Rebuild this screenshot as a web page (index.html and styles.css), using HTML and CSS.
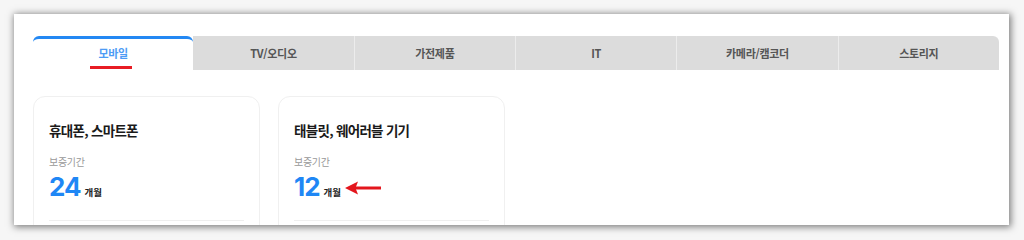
FILE: index.html
```html
<!DOCTYPE html>
<html lang="ko">
<head>
<meta charset="utf-8">
<link rel="stylesheet" href="styles.css">
</head>
<body>
<div class="frame">
  <ul class="tabs">
    <li class="tab active"><span class="tab-label">모바일</span></li>
    <li class="tab"><span class="tab-label">TV/오디오</span></li>
    <li class="tab"><span class="tab-label">가전제품</span></li>
    <li class="tab"><span class="tab-label">IT</span></li>
    <li class="tab"><span class="tab-label">카메라/캠코더</span></li>
    <li class="tab last"><span class="tab-label">스토리지</span></li>
  </ul>
  <div class="cards">
    <div class="card">
      <h3 class="card-title">휴대폰, 스마트폰</h3>
      <p class="card-label">보증기간</p>
      <div class="card-value"><span class="num">24</span><span class="unit">개월</span></div>
      <hr class="card-rule">
    </div>
    <div class="card">
      <h3 class="card-title">태블릿, 웨어러블 기기</h3>
      <p class="card-label">보증기간</p>
      <div class="card-value"><span class="num">12</span><span class="unit">개월</span>
        <svg class="arrow" width="37" height="16" viewBox="0 0 37 16" aria-hidden="true">
          <path d="M10 8 H36" stroke="#e3161d" stroke-width="3" fill="none"/>
          <path d="M0 8 L13 1.5 L10.5 8 L13 14.5 Z" fill="#e3161d"/>
        </svg>
      </div>
      <hr class="card-rule">
    </div>
  </div>
</div>
</body>
</html>
```
FILE: styles.css
```css
* { box-sizing: border-box; }
html, body { margin: 0; padding: 0; }
body {
  width: 1024px;
  height: 240px;
  background: #f6f6f6;
  font-family: "Noto Sans CJK KR", "Noto Sans", sans-serif;
  overflow: hidden;
}
.frame {
  margin: 14px 0 0 14px;
  width: 995px;
  height: 211px;
  background: #fff;
  box-shadow: 1px 1px 7px 1px rgba(0, 0, 0, 0.5);
  padding: 22px 10px 0 19px;
  overflow: hidden;
}
.tabs {
  list-style: none;
  margin: 0;
  padding: 0;
  display: flex;
  height: 34px;
}
.tab {
  flex: 1 1 0;
  background: #dcdcdc;
  border-left: 1px solid #ececec;
  display: flex;
  align-items: center;
  justify-content: center;
  font-size: 11px;
  font-weight: 700;
  color: #555;
  letter-spacing: -0.3px;
}
.tab.active {
  background: #fff;
  border-left: none;
  border-top: 3px solid #2388f3;
  border-radius: 6px 6px 0 0;
  color: #4d9cf5;
  padding-bottom: 3px;
}
.tab.active + .tab { border-left: none; }
.tab.active .tab-label {
  position: relative;
}
.tab.active .tab-label::after {
  content: "";
  position: absolute;
  left: -8px;
  right: -4px;
  top: 21px;
  height: 3px;
  background: #e81c24;
}
.tab.last { border-radius: 0 6px 0 0; }
.cards {
  display: flex;
  gap: 18px;
  margin-top: 26px;
}
.card {
  width: 227px;
  height: 160px;
  border: 1px solid #f0f0f0;
  border-radius: 12px;
  padding: 23px 15px 0 15px;
}
.card-title {
  margin: 0;
  font-size: 13.5px;
  line-height: 20px;
  font-weight: 700;
  color: #1a1a1a;
  letter-spacing: -0.7px;
}
.card-label {
  margin: 15px 0 0;
  font-size: 10px;
  line-height: 14px;
  color: #999;
  letter-spacing: -0.3px;
}
.card-value {
  display: flex;
  align-items: baseline;
  height: 28px;
  margin-top: 4px;
}
.num {
  font-family: Inter, "Noto Sans", sans-serif;
  font-size: 26px;
  line-height: 28px;
  font-weight: 700;
  color: #1f87f5;
  letter-spacing: -1px;
}
.unit {
  margin-left: 4px;
  font-size: 9.5px;
  font-weight: 700;
  color: #222;
}
.arrow {
  align-self: center;
  margin-left: 4px;
  margin-top: 2px;
}
.card-rule {
  margin: 19px 0 0;
  border: none;
  border-top: 1px solid #efefef;
}
```
